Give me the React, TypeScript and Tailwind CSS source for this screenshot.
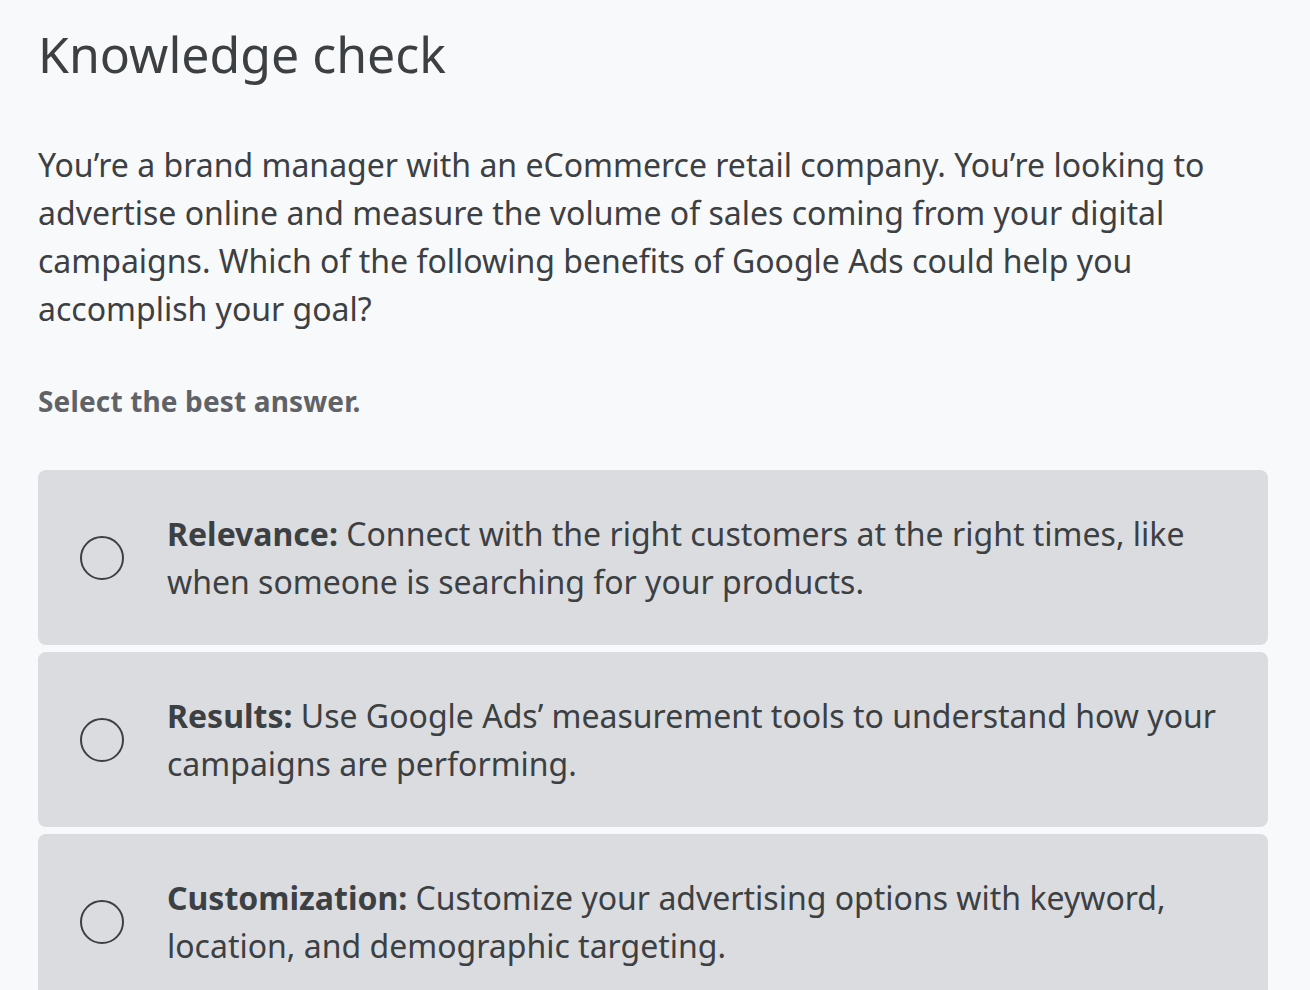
import React from "react";

const options = [
  { label: "Relevance:", text: "Connect with the right customers at the right times, like when someone is searching for your products." },
  { label: "Results:", text: "Use Google Ads’ measurement tools to understand how your campaigns are performing." },
  { label: "Customization:", text: "Customize your advertising options with keyword, location, and demographic targeting." },
];

export default function App() {
  return (
    <div className="min-h-[990px] bg-[#f8f9fa] px-[38px] pt-[22px] text-[#3c4043]" style={{ fontFamily: '"Noto Sans", "Open Sans", sans-serif' }}>
      <h1 className="text-[50px] leading-[64px] font-normal">Knowledge check</h1>
      <p className="mt-[55px] text-[32px] leading-[48px] pr-[40px]">
        You’re a brand manager with an eCommerce retail company. You’re looking to advertise online and measure the volume of sales coming from your digital campaigns. Which of the following benefits of Google Ads could help you accomplish your goal?
      </p>
      <p className="mt-[50px] text-[28px] leading-[36px] font-bold text-[#5f6368] tracking-[0.15px]">Select the best answer.</p>
      <div className="mt-[51px] flex flex-col gap-[7px] w-[1230px]">
        {options.map((o) => (
          <div key={o.label} className="flex items-center rounded-[8px] bg-[#dadce0] pl-[42px] pr-[40px] pt-[40px] pb-[39px]">
            <div className="w-[44px] h-[44px] shrink-0 rounded-full border-2 border-[#3c4043]" />
            <p className="ml-[43px] text-[32px] leading-[48px]">
              <span className="font-bold">{o.label}</span> {o.text}
            </p>
          </div>
        ))}
      </div>
    </div>
  );
}
